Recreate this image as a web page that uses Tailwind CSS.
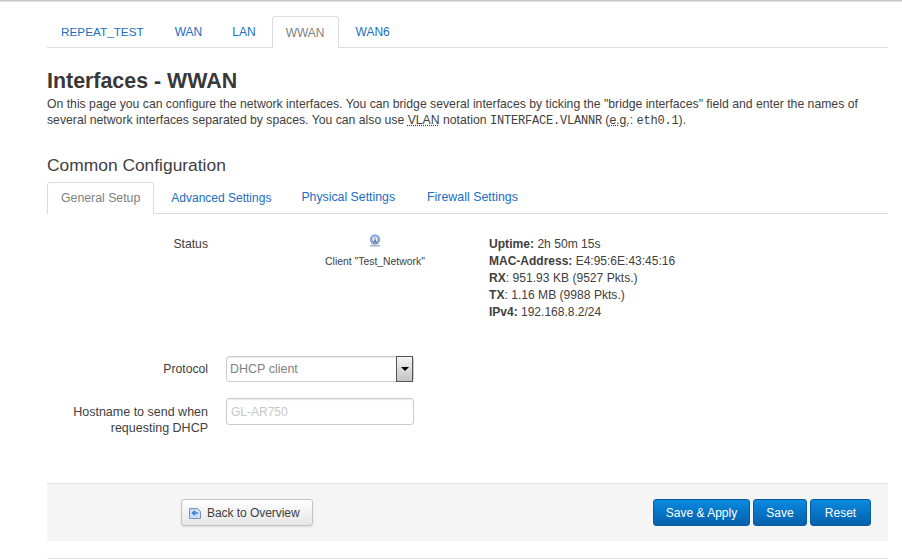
<!DOCTYPE html>
<html lang="en">
<head>
  <meta charset="UTF-8" />
  <title>Interfaces - WWAN</title>
  <script src="https://cdn.jsdelivr.net/npm/@tailwindcss/browser@4"></script>
</head>
<body class="h-[560px] w-[902px] overflow-hidden bg-white font-['Liberation_Sans',Arial,sans-serif] text-[12px] text-[#404040]">
  <div class="h-[2px] bg-gradient-to-b from-[#bdbdbd] to-[#ececec]"></div>

  <div class="ml-[47px] w-[841px] pt-[14px]">
    <!-- interface tabs -->
    <ul class="flex h-[32px] border-b border-[#dddddd] text-[12px] text-[#1b6ec2]">
      <li class="flex h-[31px] items-center px-[14px] text-[11.75px]">REPEAT_TEST</li>
      <li class="flex h-[31px] items-center pr-[16px] pl-[17px]">WAN</li>
      <li class="flex h-[31px] items-center pr-[16px] pl-[14px]">LAN</li>
      <li class="flex h-[32px] items-center rounded-t-[3px] border border-b-0 border-[#dddddd] bg-white px-[13px] text-[#808080]">WWAN</li>
      <li class="flex h-[31px] items-center px-[17px]">WAN6</li>
    </ul>

    <h2 class="mt-[21px] text-[21.4px] leading-[24px] font-bold text-[#383838]">Interfaces - WWAN</h2>
    <p class="mt-[3px] w-[830px] text-[12.22px] leading-[16px]">On this page you can configure the network interfaces. You can bridge several interfaces by ticking the "bridge interfaces" field and enter the names of several network interfaces separated by spaces. You can also use <abbr class="underline decoration-dotted">VLAN</abbr> notation <code class="font-['Liberation_Mono',monospace] text-[12px] tracking-[-0.2px]">INTERFACE.VLANNR</code> (<abbr class="underline decoration-dotted">e.g.</abbr>: <code class="font-['Liberation_Mono',monospace] text-[12px] tracking-[-0.2px]">eth0.1</code>).</p>

    <h3 class="mt-[26px] text-[17.4px] leading-[20px] text-[#404040]">Common Configuration</h3>

    <!-- section tabs -->
    <ul class="mt-[7px] flex h-[32px] border-b border-[#dddddd] text-[12.3px] text-[#1b6ec2]">
      <li class="flex h-[32px] items-center rounded-t-[3px] border border-b-0 border-[#dddddd] bg-white px-[13px] pb-px text-[#808080]">General Setup</li>
      <li class="flex h-[31px] items-center pr-[15px] pl-[17px] text-[12px]">Advanced Settings</li>
      <li class="flex h-[31px] items-center pr-[17px] pl-[15px]">Physical Settings</li>
      <li class="flex h-[31px] items-center px-[15px] text-[12.4px]">Firewall Settings</li>
    </ul>

    <!-- status -->
    <div class="mt-[21px] flex h-[121px]">
      <div class="w-[161px] pt-px text-right text-[12.2px] leading-[16px]">Status</div>
      <div class="flex w-[281px] items-start">
        <div class="ml-[102px] flex w-[130px] flex-col items-center">
          <svg class="mt-[-1px] blur-[0.4px]" width="14" height="13" viewBox="0 0 14 13">
            <circle cx="7" cy="5.5" r="5.2" fill="#8aa8d8" />
            <circle cx="7" cy="5" r="2.6" fill="#e4ecf8" />
            <path d="M7 3.5v5M5 10l2-4 2 4" fill="none" stroke="#66768f" stroke-width="0.9" />
            <path d="M2 11.8h10" stroke="#a5afbd" stroke-width="1.4" />
          </svg>
          <small class="mt-[9px] text-[10.4px] leading-[12px] text-[#404040]">Client "Test_Network"</small>
        </div>
      </div>
      <div class="pt-px text-[12.1px] leading-[17px]">
        <div><b>Uptime:</b> 2h 50m 15s</div>
        <div class="text-[12px]"><b>MAC-Address:</b> E4:95:6E:43:45:16</div>
        <div><b>RX</b>: 951.93 KB (9527 Pkts.)</div>
        <div><b>TX</b>: 1.16 MB (9988 Pkts.)</div>
        <div class="text-[12px]"><b>IPv4:</b> 192.168.8.2/24</div>
      </div>
    </div>

    <!-- form rows -->
    <div class="flex h-[42px] items-start">
      <label class="w-[161px] pt-[5px] text-right text-[12.2px] leading-[16px]">Protocol</label>
      <div class="ml-[18px] flex h-[26px] w-[188px] items-center rounded-[3px] border border-[#cccccc] pl-[3px] text-[12.5px] text-[#808080] shadow-[inset_0_1px_1px_rgba(0,0,0,0.08)]">
        <span class="flex-1">DHCP client</span>
        <span class="flex h-[26px] w-[17px] items-center justify-center border border-[#555555] bg-gradient-to-b from-[#f4f4f4] to-[#c4c4c4]">
          <span class="h-0 w-0 border-x-[4px] border-t-[4px] border-x-transparent border-t-black"></span>
        </span>
      </div>
    </div>
    <div class="flex items-start">
      <label class="w-[161px] pt-[6px] text-right text-[12.5px] leading-[16px]">Hostname to send when requesting DHCP</label>
      <div class="ml-[18px] flex h-[27px] w-[188px] items-center rounded-[3px] border border-[#cccccc] pl-[4px] text-[#c8c8c8] shadow-[inset_0_1px_1px_rgba(0,0,0,0.08)]">GL-AR750</div>
    </div>

    <!-- actions -->
    <div class="mt-[47px] flex h-[58px] items-center border-t border-[#e3e3e3] bg-[#f5f5f5] pr-[17px] pl-[134px]">
      <button class="flex h-[27px] w-[132px] items-center rounded-[3px] border border-[#c4c4c4] bg-gradient-to-b from-white to-[#e6e6e6] pl-[6px] text-[12px] tracking-[-0.05px] text-[#404040] shadow-[0_1px_2px_rgba(0,0,0,0.1)]">
        <svg width="14" height="14" viewBox="0 0 14 14" class="mr-[5px]">
          <path d="M1.5 2.5h8l3 3v7h-11z" fill="#c9defa" stroke="#7d93b5" />
          <path d="M10 7H5M7 4.8 4.6 7 7 9.2" fill="none" stroke="#3f7fd0" stroke-width="1.6" />
        </svg>
        Back to Overview
      </button>
      <div class="ml-auto flex gap-[3px] text-[12px] text-white">
        <button class="h-[27px] w-[97px] rounded-[3px] border border-[#0b5c98] bg-gradient-to-b from-[#0a8ae0] to-[#0560ad]">Save &amp; Apply</button>
        <button class="h-[27px] w-[54px] rounded-[3px] border border-[#0b5c98] bg-gradient-to-b from-[#0a8ae0] to-[#0560ad]">Save</button>
        <button class="h-[27px] w-[61px] rounded-[3px] border border-[#0b5c98] bg-gradient-to-b from-[#0a8ae0] to-[#0560ad]">Reset</button>
      </div>
    </div>
    <div class="mt-[17px] border-t border-[#e8e8e8]"></div>
  </div>
</body>
</html>
